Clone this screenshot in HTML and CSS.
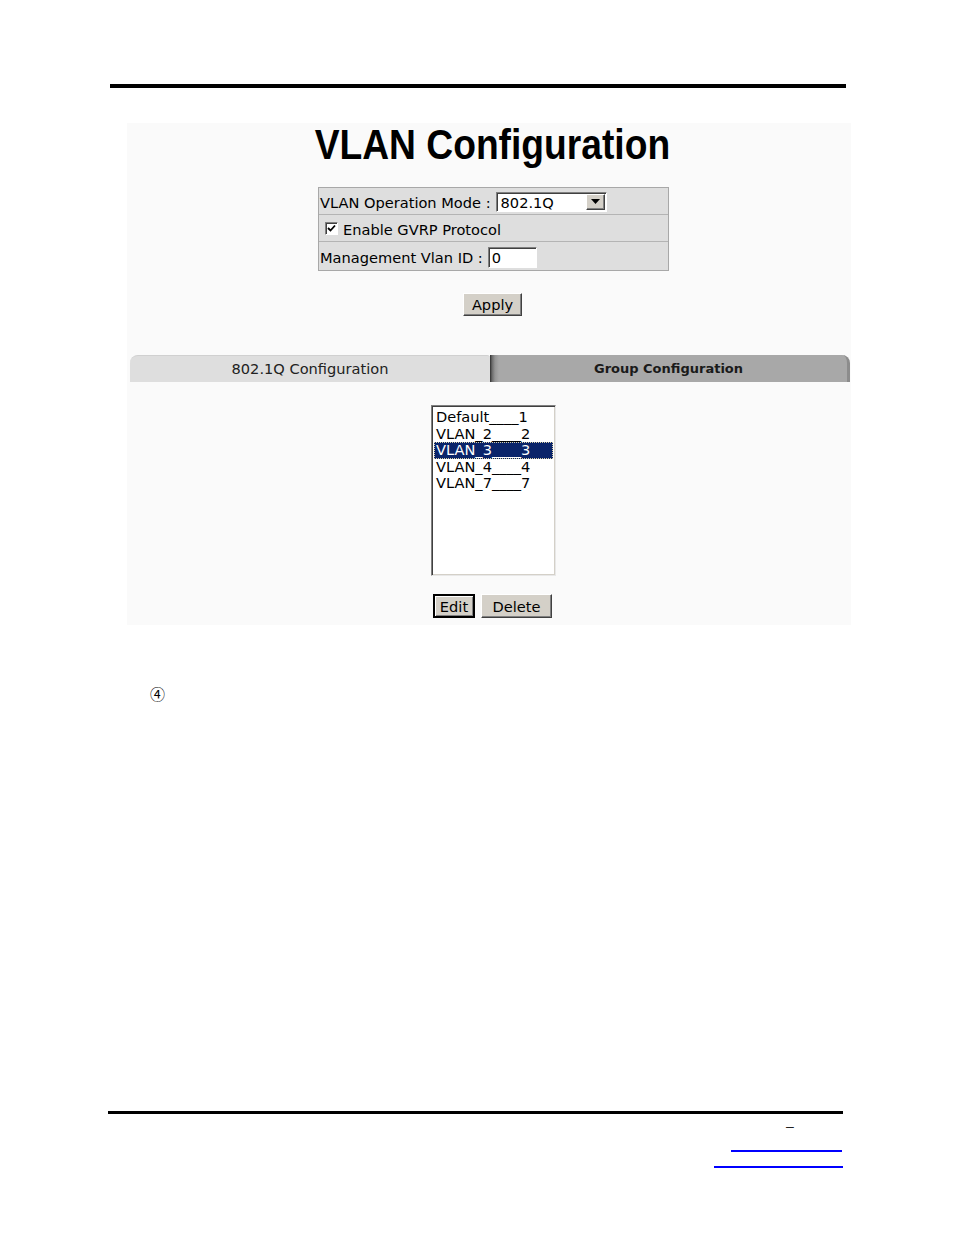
FILE: index.html
```html
<!DOCTYPE html>
<html>
<head>
<meta charset="utf-8">
<title>VLAN Configuration</title>
<link rel="stylesheet" href="styles.css">
</head>
<body>
<div class="page">
  <div class="top-rule"></div>

  <div class="panel">
    <h1 class="title"><span class="title-text">VLAN Configuration</span></h1>

    <div class="settings">
      <div class="row">
        <span class="label">VLAN Operation Mode :</span>
        <span class="select">
          <span class="select-value">802.1Q</span>
          <span class="select-btn">
            <svg width="9" height="5" viewBox="0 0 9 5"><path d="M0 0H9L4.5 5Z" fill="#000"/></svg>
          </span>
        </span>
      </div>
      <div class="row row-check">
        <span class="checkbox">
          <svg width="9" height="9" viewBox="0 0 9 9"><path d="M1 4L3.5 6.5L8 1.5" fill="none" stroke="#000" stroke-width="1.8"/></svg>
        </span>
        <span class="label">Enable GVRP Protocol</span>
      </div>
      <div class="row row-last">
        <span class="label">Management Vlan ID :</span>
        <span class="field">0</span>
      </div>
    </div>

    <div class="apply-row">
      <span class="btn btn-apply">Apply</span>
    </div>

    <div class="tabs">
      <div class="tab tab-left">802.1Q Configuration</div>
      <div class="tab tab-right">Group Configuration</div>
    </div>

    <div class="listbox">
      <div class="item">Default____1</div>
      <div class="item">VLAN_2____2</div>
      <div class="item selected">VLAN_3____3</div>
      <div class="item">VLAN_4____4</div>
      <div class="item">VLAN_7____7</div>
    </div>

    <div class="actions">
      <span class="btn btn-edit">Edit</span>
      <span class="btn btn-delete">Delete</span>
    </div>
  </div>

  <div class="marker">④</div>

  <div class="bottom-rule"></div>
  <div class="footer-dash">–</div>
  <div class="link-line link-one"></div>
  <div class="link-line link-two"></div>
</div>
</body>
</html>
```

FILE: styles.css
```css
html, body {
  margin: 0;
  padding: 0;
  background: #ffffff;
}

.page {
  width: 954px;
  height: 1235px;
  padding-top: 84px;
  box-sizing: border-box;
  font-family: "DejaVu Sans", Verdana, sans-serif;
  color: #000;
}

.top-rule {
  margin-left: 110px;
  width: 736px;
  height: 4px;
  background: #000;
}

.panel {
  margin-top: 35px;
  margin-left: 127px;
  width: 724px;
  height: 502px;
  background: #fafafa;
  display: flex;
  flex-direction: column;
  align-items: flex-start;
}

.title {
  margin: 0;
  width: 100%;
  padding-left: 6px;
  box-sizing: border-box;
  text-align: center;
  height: 43px;
  line-height: 43px;
  font-family: "Liberation Sans", Arial, sans-serif;
  font-weight: bold;
  font-size: 43px;
  color: #000;
}

.title-text {
  display: inline-block;
  transform: scaleX(0.865);
  transform-origin: center;
  white-space: nowrap;
}

.settings {
  margin-top: 21px;
  margin-left: 191px;
  width: 351px;
  box-sizing: border-box;
  border: 1px solid #a8a8a8;
  background: #dedede;
  font-size: 14.6px;
}

.row {
  height: 26px;
  display: flex;
  align-items: center;
  padding-left: 1px;
  border-bottom: 1px solid #b4b4b4;
  white-space: nowrap;
}

.row-last {
  height: 28px;
  border-bottom: none;
}

.label {
  line-height: 17px;
  padding-top: 3px;
}

.select {
  margin-left: 5px;
  margin-top: 1px;
  width: 111px;
  height: 20px;
  box-sizing: border-box;
  background: #fff;
  border: 1px solid;
  border-color: #808080 #ffffff #ffffff #808080;
  box-shadow: inset 1px 1px #404040;
  display: flex;
  align-items: center;
  justify-content: space-between;
  padding: 1px 1px 1px 4px;
}

.select-value {
  line-height: 16px;
  padding-top: 2px;
}

.select-btn {
  width: 19px;
  height: 16px;
  box-sizing: border-box;
  background: #d4d0c8;
  border: 1px solid;
  border-color: #ffffff #404040 #404040 #ffffff;
  box-shadow: inset -1px -1px #808080;
  display: flex;
  align-items: center;
  justify-content: center;
}

.row-check {
  padding-left: 6px;
}

.checkbox {
  width: 13px;
  height: 13px;
  box-sizing: border-box;
  background: #fff;
  border: 1px solid;
  border-color: #808080 #ffffff #ffffff #808080;
  box-shadow: inset 1px 1px #404040;
  display: flex;
  align-items: center;
  justify-content: center;
  margin-right: 5px;
  margin-top: 1px;
}

.field {
  margin-left: 5px;
  margin-top: 2px;
  width: 49px;
  height: 21px;
  box-sizing: border-box;
  background: #fff;
  border: 1px solid;
  border-color: #808080 #ffffff #ffffff #808080;
  box-shadow: inset 1px 1px #404040;
  line-height: 18px;
  padding-left: 3px;
  padding-top: 1px;
}

.apply-row {
  margin-top: 22px;
  margin-left: 336px;
  display: flex;
}

.btn {
  display: inline-flex;
  align-items: center;
  justify-content: center;
  box-sizing: border-box;
  height: 23px;
  background: #d4d0c8;
  border: 1px solid;
  border-color: #ffffff #404040 #404040 #ffffff;
  box-shadow: inset -1px -1px #808080;
  font-size: 14.6px;
  padding-top: 0;
  color: #000;
}

.btn-apply {
  width: 59px;
}

.tabs {
  margin-top: 39px;
  margin-left: 3px;
  width: 720px;
  height: 27px;
  display: flex;
}

.tab {
  height: 27px;
  box-sizing: border-box;
  display: flex;
  align-items: center;
  justify-content: center;
  padding-bottom: 1px;
  white-space: nowrap;
}

.tab-left {
  width: 360px;
  background: #dedede;
  border-top-left-radius: 8px;
  border-top-right-radius: 3px;
  border-top: 1px solid #d0d0d0;
  font-size: 14.6px;
  color: #222;
}

.tab-right {
  flex: 1;
  background: linear-gradient(to right, #2e2e2e 0px, #6a6a6a 2px, #959595 5px, #a8a8a8 9px, #a8a8a8 100%);
  border-top-right-radius: 8px;
  border-right: 3px solid #8c8c8c;
  font-size: 13px;
  font-weight: bold;
  color: #1a1a1a;
}

.listbox {
  margin-top: 23px;
  margin-left: 304px;
  width: 125px;
  height: 171px;
  box-sizing: border-box;
  background: #fff;
  border: 1px solid;
  border-color: #808080 #e8e8e8 #e8e8e8 #808080;
  box-shadow: inset 1px 1px #404040, inset -1px -1px #d4d0c8;
  padding: 3px 2px 0 2px;
  font-size: 14.6px;
}

.item {
  height: 16.5px;
  line-height: 16.5px;
  padding-left: 2px;
  white-space: nowrap;
  overflow: hidden;
}

.item.selected {
  background: #0a246a;
  color: #fff;
  outline: 1px dotted #d8d0a8;
  outline-offset: -1px;
}

.actions {
  margin-top: 18px;
  margin-left: 306px;
  display: flex;
  gap: 6px;
}

.btn-edit {
  width: 42px;
  height: 24px;
  outline: 1px solid #000;
  outline-offset: -1px;
  border-width: 2px 2px 2px 2px;
  border-color: #000;
  box-shadow: inset 1px 1px #fff, inset -1px -1px #808080;
}

.btn-delete {
  width: 71px;
  height: 24px;
}

.marker {
  margin-top: 60px;
  margin-left: 150px;
  height: 17px;
  line-height: 17px;
  font-size: 15px;
  font-family: "Noto Sans CJK SC", "DejaVu Sans", sans-serif;
}

.bottom-rule {
  margin-top: 409px;
  margin-left: 108px;
  width: 735px;
  height: 3px;
  background: #000;
}

.footer-dash {
  margin-left: 786px;
  margin-top: 4px;
  height: 16px;
  line-height: 16px;
  font-family: "Liberation Sans", Arial, sans-serif;
  font-size: 14px;
  color: #222;
}

.link-line {
  background: #0000ff;
  box-sizing: border-box;
  height: 2px;
}

.link-one {
  margin-top: 16px;
  margin-left: 731px;
  width: 111px;
}

.link-two {
  margin-top: 14px;
  margin-left: 714px;
  width: 129px;
}
```
